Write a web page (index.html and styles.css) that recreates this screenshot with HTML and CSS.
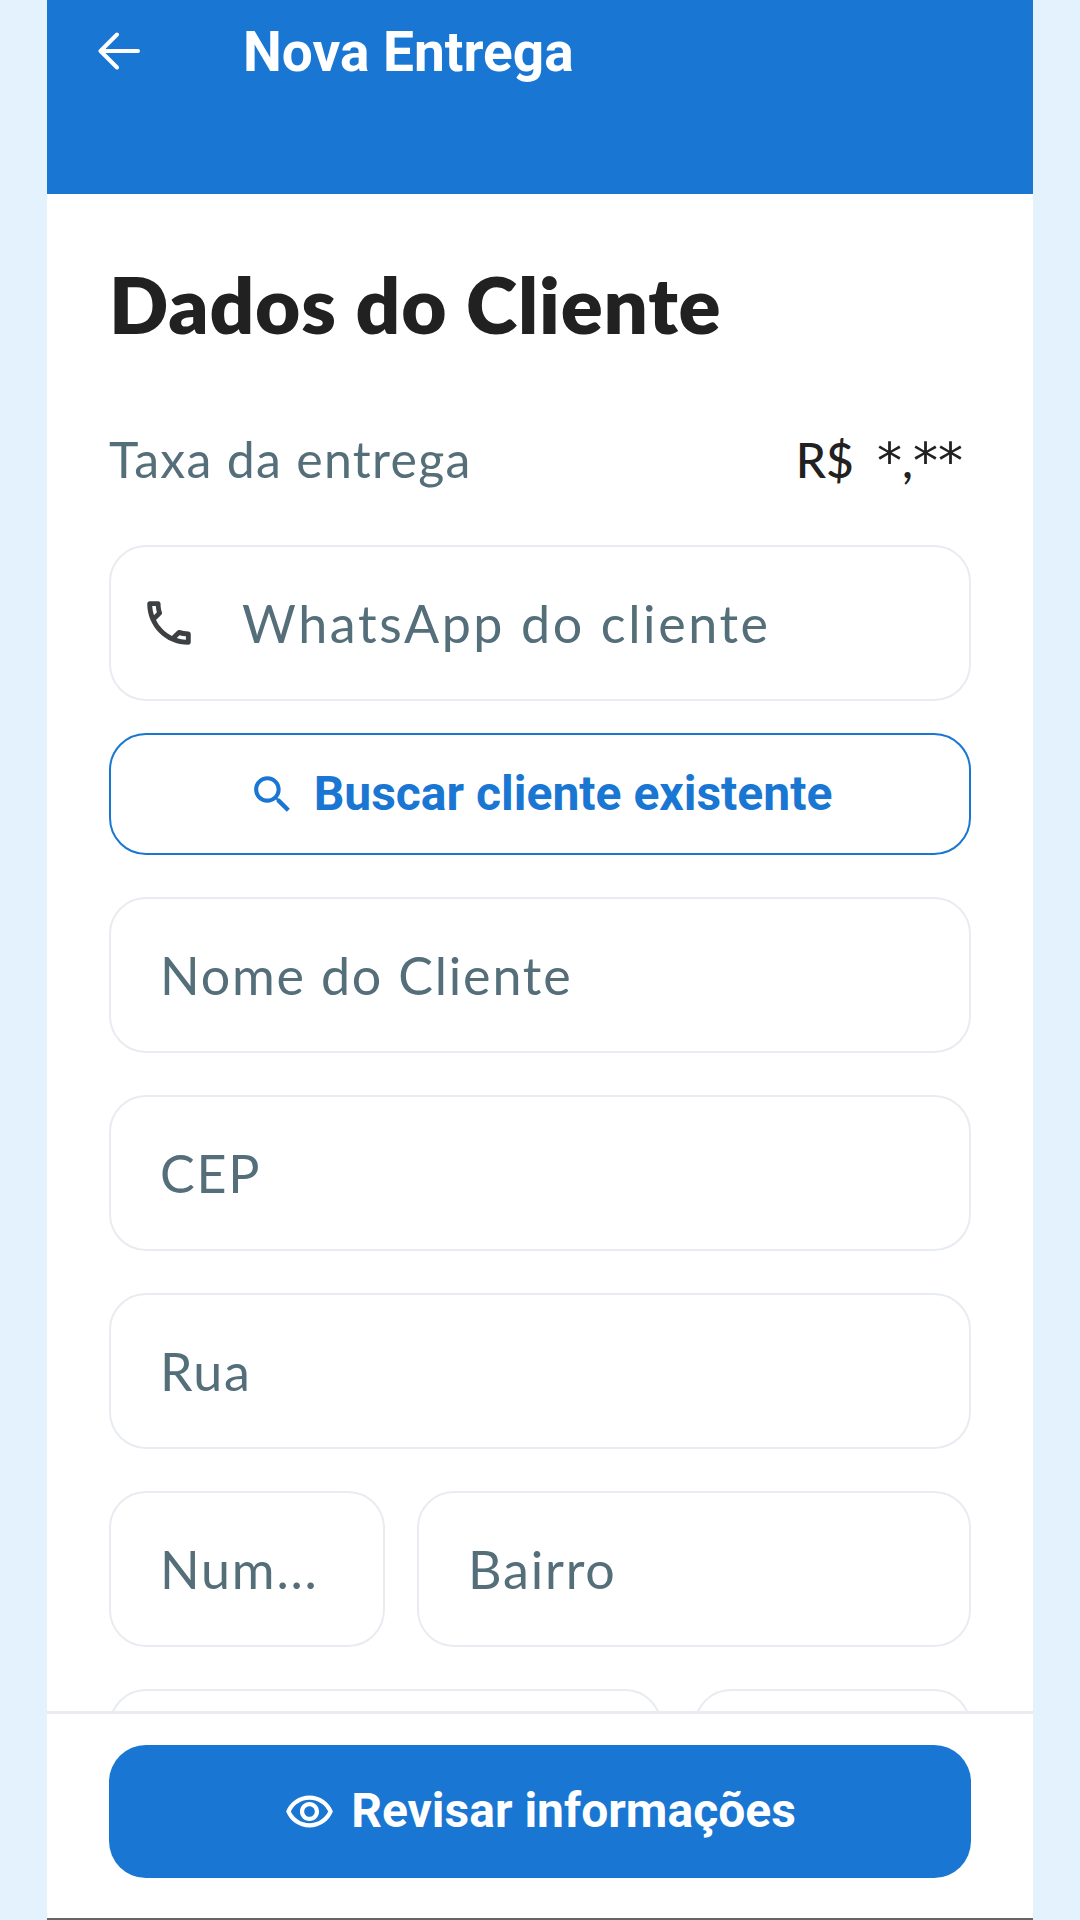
FILE: index.html
```html
<!DOCTYPE html>
<html lang="pt-BR">
<head>
<meta charset="utf-8">
<title>Nova Entrega</title>
<link rel="stylesheet" href="styles.css">
</head>
<body>
<div class="app">
  <header class="topbar">
    <svg class="back" viewBox="0 0 42 38" aria-hidden="true"><path d="M40 19H3M19 2.500 2.500 19 19 35.500"/></svg>
    <h1 class="topbar-title">Nova Entrega</h1>
  </header>
  <main class="content">
    <h2 class="section-title">Dados do Cliente</h2>
    <div class="fee">
      <span class="fee-label">Taxa da entrega</span>
      <span class="fee-value">R$ <span class="stars">*</span>,<span class="stars">**</span></span>
    </div>
    <div class="form">
      <div class="field field-icon">
        <svg class="phone" viewBox="0 0 24 24" aria-hidden="true"><path d="M6.540 5c.06.89.21 1.760.45 2.590l-1.200 1.200c-.41-1.200-.67-2.470-.76-3.790h1.510m9.860 12.020c.85.24 1.720.39 2.600.45v1.490c-1.320-.09-2.590-.35-3.800-.75l1.200-1.190M7.500 3H4c-.55 0-1 .45-1 1 0 9.390 7.610 17 17 17 .55 0 1-.45 1-1v-3.490c0-.55-.45-1-1-1-1.240 0-2.450-.2-3.570-.57-.1-.04-.21-.05-.31-.05-.26 0-.51.1-.71.29l-2.200 2.200c-2.830-1.450-5.150-3.760-6.590-6.590l2.200-2.200c.28-.28.36-.67.25-1.020C8.700 6.450 8.500 5.250 8.500 4c0-.55-.45-1-1-1z"/></svg>
        <span class="placeholder wide">WhatsApp do cliente</span>
      </div>
      <button class="btn-outline" type="button">
        <svg class="search" viewBox="0 0 24 24" aria-hidden="true"><path d="M15.500 14h-.79l-.28-.27C15.410 12.590 16 11.110 16 9.500 16 5.910 13.090 3 9.500 3S3 5.910 3 9.500 5.910 16 9.500 16c1.610 0 3.090-.59 4.230-1.570l.27.28v.79l5 4.990L20.490 19l-4.990-5zm-6 0C7.010 14 5 11.990 5 9.500S7.010 5 9.500 5 14 7.010 14 9.500 11.990 14 9.500 14z"/></svg>
        Buscar cliente existente
      </button>
      <div class="field"><span class="placeholder">Nome do Cliente</span></div>
      <div class="field"><span class="placeholder">CEP</span></div>
      <div class="field"><span class="placeholder">Rua</span></div>
      <div class="row">
        <div class="field field-num"><span class="placeholder">Num...</span></div>
        <div class="field field-grow"><span class="placeholder">Bairro</span></div>
      </div>
      <div class="row">
        <div class="field field-grow"></div>
        <div class="field field-uf"></div>
      </div>
    </div>
  </main>
  <footer class="footer">
    <button class="btn-primary" type="button">
      <svg class="eye" viewBox="0 0 24 24" aria-hidden="true"><path d="M12 6.500c3.790 0 7.170 2.130 8.820 5.500-1.650 3.370-5.020 5.500-8.820 5.500S4.830 15.370 3.180 12C4.830 8.630 8.210 6.500 12 6.500m0-2C7 4.500 2.730 7.610 1 12c1.730 4.390 6 7.500 11 7.500s9.270-3.110 11-7.500c-1.730-4.390-6-7.500-11-7.500zm0 5c1.380 0 2.500 1.120 2.500 2.500s-1.120 2.500-2.500 2.500-2.500-1.120-2.500-2.500 1.120-2.500 2.500-2.500m0-2c-2.480 0-4.500 2.020-4.500 4.500s2.020 4.500 4.500 4.500 4.500-2.020 4.500-4.500-2.020-4.500-4.500-4.500z"/></svg>
      <span class="btn-label">Revisar informações</span>
    </button>
  </footer>
</div>
</body>
</html>
```
FILE: styles.css
```css
* { box-sizing: border-box; }
html, body { margin: 0; height: 100%; }
body {
  background: #e3f2fd;
  font-family: "Lato", "Noto Sans", sans-serif;
  overflow: hidden;
}
.app {
  width: 986px;
  height: 1920px;
  margin: 0 auto;
  background: #fff;
  display: flex;
  flex-direction: column;
  overflow: hidden;
  border-bottom: 2px solid #666;
}
.topbar {
  flex: none;
  height: 194px;
  background: #1976d2;
  display: flex;
  align-items: flex-start;
  padding: 22px 0 0 51px;
  color: #fff;
}
.back {
  width: 42px;
  height: 38px;
  margin-top: 10px;
  fill: none;
  stroke: #fff;
  stroke-width: 4;
  stroke-linecap: round;
  stroke-linejoin: round;
}
.topbar-title {
  margin: 0 0 0 103px;
  font: 700 55px/60px "Roboto", sans-serif;
}
.content {
  flex: 1;
  min-height: 0;
  overflow: hidden;
  padding: 67px 62px 0;
}
.section-title {
  margin: 0;
  color: #212121;
  font-size: 78px;
  line-height: 86px;
  font-weight: 800;
  letter-spacing: .8px;
}
.fee {
  display: flex;
  justify-content: space-between;
  align-items: baseline;
  height: 60px;
  margin-top: 82px;
  padding-right: 8px;
}
.fee-label { color: #546e7a; font-size: 50px; letter-spacing: 1.300px; }
.fee-value { color: #212121; font-size: 48px; font-weight: 500; word-spacing: 11px; }
.stars { font-family: "DejaVu Sans", sans-serif; font-weight: 400; font-size: 50px; }
.form {
  display: flex;
  flex-direction: column;
  margin-top: 56px;
  gap: 42px;
}
.field {
  height: 156px;
  border: 2.500px solid #e8ecf1;
  border-radius: 37px;
  display: flex;
  align-items: center;
  padding-left: 49px;
  background: #fff;
}
.field-icon { margin-bottom: -10px; padding-left: 29px; }
.placeholder { color: #546e7a; font-size: 52px; letter-spacing: 1.800px; }
.placeholder.wide { letter-spacing: 2.600px; margin-left: 44px; }
.phone { width: 58px; height: 58px; fill: #3c4043; flex: none; }
.btn-outline {
  height: 122px;
  border: 2.500px solid #1976d2;
  border-radius: 37px;
  background: #fff;
  color: #1976d2;
  font: 700 48px/1 "Roboto", sans-serif;
  display: flex;
  align-items: center;
  justify-content: center;
  gap: 17px;
}
.search { width: 49px; height: 49px; fill: #1976d2; }
.row { display: flex; gap: 32px; }
.field-num { width: 276px; flex: none; }
.field-grow { flex: 1; }
.field-uf { width: 277px; flex: none; }
.footer {
  flex: none;
  height: 207px;
  border-top: 3px solid #e8ecf1;
  background: #fff;
  padding: 31px 62px 0;
}
.btn-primary {
  width: 100%;
  height: 133px;
  border: 0;
  border-radius: 37px;
  background: #1976d2;
  color: #fff;
  font: 700 48px/1 "Roboto", sans-serif;
  display: flex;
  align-items: center;
  justify-content: center;
  gap: 16px;
}
.btn-label { margin-bottom: 2px; }
.eye { width: 51px; height: 51px; fill: #fff; }
```
